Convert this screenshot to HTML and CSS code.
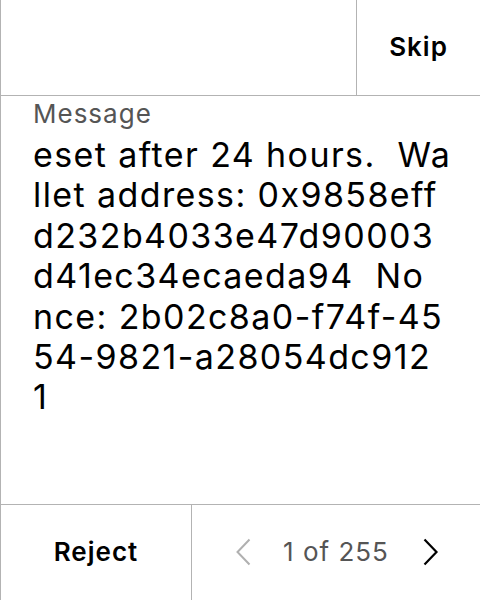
FILE: index.html
```html
<!DOCTYPE html>
<html>
<head>
<meta charset="utf-8">
<link rel="stylesheet" href="styles.css">
</head>
<body>
<div class="screen">
  <header class="topbar">
    <div class="topbar-space"></div>
    <button class="skip">Skip</button>
  </header>
  <main class="content">
    <div class="label">Message</div>
    <div class="message">eset after 24 hours.&nbsp; Wa<br>llet address: 0x9858eff<br>d232b4033e47d90003<br>d41ec34ecaeda94&nbsp; No<br>nce: 2b02c8a0-f74f-45<br>54-9821-a28054dc912<br>1</div>
  </main>
  <footer class="bottombar">
    <button class="reject">Reject</button>
    <div class="pager">
      <svg class="chev prev" viewBox="0 0 16 28" width="16" height="28"><path d="M14.5 1.5 L2.5 14 L14.5 26.5" fill="none" stroke="currentColor" stroke-width="2"/></svg>
      <span class="count">1 of 255</span>
      <svg class="chev next" viewBox="0 0 16 28" width="16" height="28"><path d="M1.5 1.5 L13.5 14 L1.5 26.5" fill="none" stroke="currentColor" stroke-width="2.2"/></svg>
    </div>
  </footer>
</div>
</body>
</html>
```
FILE: styles.css
```css
* { box-sizing: border-box; }
html, body { margin: 0; padding: 0; background: #fff; }
body { font-family: Inter, "Noto Sans", sans-serif; color: #000; }
.screen {
  width: 480px;
  height: 600px;
  border-left: 1px solid #b3b3b3;
  display: flex;
  flex-direction: column;
}
.topbar {
  height: 96px;
  display: flex;
  border-bottom: 1px solid #b3b3b3;
}
.topbar-space { flex: 1; }
.skip {
  width: 124px;
  border: 0;
  border-left: 1px solid #b3b3b3;
  background: none;
  font-family: inherit;
  font-size: 26px;
  letter-spacing: 1px;
  font-weight: 600;
  color: #000;
  padding: 0 0 2px 0;
}
.content {
  flex: 1;
  padding: 2px 0 0 32px;
  overflow: hidden;
}
.label {
  font-size: 26px;
  letter-spacing: 1px;
  line-height: 32px;
  color: #555;
}
.message {
  font-size: 34px;
  letter-spacing: 1.4px;
  line-height: 40.4px;
  margin-top: 5px;
}
.bottombar {
  height: 96px;
  display: flex;
  border-top: 1px solid #b3b3b3;
}
.reject {
  width: 191px;
  border: 0;
  border-right: 1px solid #b3b3b3;
  background: none;
  font-family: inherit;
  font-size: 26px;
  letter-spacing: 1px;
  font-weight: 600;
  color: #000;
  padding: 0 0 2px 0;
}
.pager {
  flex: 1;
  display: flex;
  align-items: center;
  padding-left: 43px;
  padding-bottom: 2px;
}
.chev { display: block; }
.prev { color: #b0b0b0; }
.next { color: #000; }
.count {
  font-size: 26px;
  letter-spacing: 1px;
  color: #555;
  margin: 0 34px 0 32px;
}
```
